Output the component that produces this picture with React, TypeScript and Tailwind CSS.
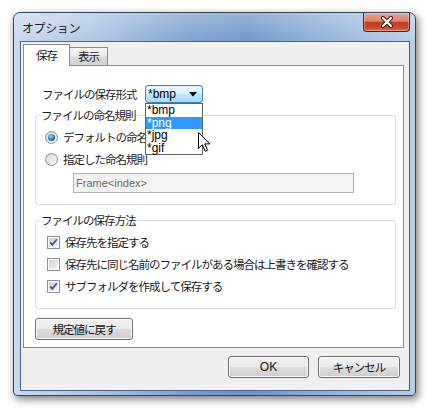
import React from "react";

function WinButton({ children, className }: { children: React.ReactNode; className?: string }) {
  return (
    <div
      className={`h-[22px] rounded-[3px] border border-[#707070] bg-[linear-gradient(180deg,#f2f2f2_0%,#ebebeb_48%,#dddddd_52%,#cfcfcf_100%)] shadow-[inset_0_0_0_1px_#fbfbfb] flex items-center justify-center text-[#111] ${className ?? ""}`}
    >
      {children}
    </div>
  );
}

function Radio({ checked }: { checked?: boolean }) {
  return (
    <span className="w-[13px] h-[13px] shrink-0 rounded-full border border-[#8e8f8f] bg-[linear-gradient(135deg,#cfd1d4,#f8f8f8)] flex items-center justify-center">
      {checked ? (
        <span className="w-[7px] h-[7px] rounded-full bg-[radial-gradient(circle_at_40%_35%,#9ad8f6_0%,#2a78b8_55%,#174f80_100%)]" />
      ) : (
        <span className="w-[9px] h-[9px] rounded-full bg-[linear-gradient(135deg,#d8d8d8,#fafafa)]" />
      )}
    </span>
  );
}

function Check({ checked }: { checked?: boolean }) {
  return (
    <span className="relative w-[13px] h-[13px] shrink-0 border border-[#8e8f8f] bg-white p-[1px]">
      <span className="block w-full h-full bg-[linear-gradient(135deg,#c9cdd3,#f7f7f7)]" />
      {checked && (
        <svg className="absolute -left-px -top-px" width="13" height="13" viewBox="0 0 13 13">
          <path d="M3.2 6.3 L5.4 8.9 L9.8 3.2" fill="none" stroke="#3a5a92" strokeWidth="1.8" />
        </svg>
      )}
    </span>
  );
}

export default function App() {
  return (
    <div className="w-[432px] h-[413px] bg-white pt-[12px] pl-[13px] font-['Noto_Sans_CJK_JP',sans-serif] text-[11.5px] leading-[13px] tracking-[-1px] text-[#1a1a1a]">
      <div className="relative w-[403px] h-[384px] flex flex-col rounded-t-[7px] rounded-b-[4px] border border-[#33475f] bg-[linear-gradient(90deg,#c9d8ea_0%,#b0c7e3_18%,#7d9fcf_42%,#6c92c7_58%,#97b5dc_82%,#b9cde6_100%)] shadow-[2px_3px_9px_rgba(0,0,0,0.55)]">
        {/* title bar */}
        <div className="h-[28px] flex items-start justify-between rounded-t-[6px] bg-[linear-gradient(180deg,rgba(255,255,255,0.3),rgba(255,255,255,0.05))]">
          <span className="pl-[8px] pt-[8px] text-[12px] tracking-[-0.4px] text-[#1e1e1e]">オプション</span>
          <div className="mr-[5px] w-[47px] h-[19px] rounded-b-[4px] border border-t-0 border-[#57201a] bg-[linear-gradient(180deg,#e8a595_0%,#d9846f_45%,#c23e22_52%,#c5462a_80%,#dd7357_100%)] shadow-[inset_0_0_0_1px_rgba(255,255,255,0.3)] flex items-center justify-center">
            <svg width="14" height="12" viewBox="0 0 14 12">
              <path d="M3 2 L11 10 M11 2 L3 10" stroke="#3b1610" strokeWidth="4" strokeLinecap="round" />
              <path d="M3 2 L11 10 M11 2 L3 10" stroke="#ffffff" strokeWidth="2.2" strokeLinecap="round" />
            </svg>
          </div>
        </div>

        {/* client area */}
        <div className="ml-[6px] w-[390px] h-[350px] border border-[#46658c] bg-[#f0f0f0] flex flex-col">
          {/* tabs */}
          <div className="mt-[2px] ml-[2px] h-[21px] flex items-end">
            <div className="relative z-10 -mb-px w-[47px] h-[22px] border border-b-0 border-[#898c95] bg-white flex items-center justify-center">
              保存
            </div>
            <div className="w-[38px] h-[18px] border border-l-0 border-b-0 border-[#898c95] bg-[linear-gradient(180deg,#f3f3f3_0%,#ebebeb_48%,#dddddd_52%,#cfcfcf_100%)] flex items-center justify-center">
              表示
            </div>
          </div>

          {/* panel */}
          <div className="ml-[2px] w-[381px] h-[283px] border border-[#898c95] bg-white flex flex-col">
            <div className="relative z-20 mt-[19px] ml-[18px] h-[18px] flex items-center">
              <span className="w-[103px]">ファイルの保存形式</span>
              <div className="relative">
                <div className="w-[58px] h-[18px] rounded-[3px] border border-[#3c7fb1] bg-[linear-gradient(180deg,#eaf6fd_0%,#d9f0fc_48%,#bee6fd_52%,#a7d9f5_100%)] flex items-center justify-between pl-[2px] pr-[5px] font-['Liberation_Sans',sans-serif] text-[12px] tracking-normal text-black">
                  <span>*bmp</span>
                  <svg width="8" height="5" viewBox="0 0 8 5">
                    <path d="M0 0 L8 0 L4 4.5 Z" fill="#000" />
                  </svg>
                </div>
                <div className="absolute left-0 top-full w-[58px] border border-[#646464] bg-white font-['Liberation_Sans',sans-serif] text-[12px] leading-[12.5px] tracking-normal text-black">
                  <div className="pl-[1px] h-[12.5px]">*bmp</div>
                  <div className="pl-[1px] h-[12.5px] bg-[#3399ff] text-white">*png</div>
                  <div className="pl-[1px] h-[12.5px]">*jpg</div>
                  <div className="pl-[1px] h-[12.5px]">*gif</div>
                </div>
                <svg className="absolute left-[53px] top-[47px]" width="13" height="21" viewBox="0 0 13 21">
                  <path
                    d="M0.5 0.5 L0.5 16.5 L4.3 12.8 L7.2 19.3 L9.6 18.3 L6.8 11.9 L12 11.9 Z"
                    fill="#fff"
                    stroke="#000"
                    strokeWidth="1"
                    strokeLinejoin="miter"
                  />
                </svg>
              </div>
            </div>

            <fieldset className="mt-[6px] ml-[11px] w-[361px] rounded-[3px] border border-[#d5dfe5]">
              <legend className="ml-[4px] px-[1px] leading-[13px]">ファイルの命名規則</legend>
              <div className="pt-[4px] pl-[9px] pb-[11px] flex flex-col">
                <div className="h-[22px] flex items-center gap-[5px]">
                  <Radio checked />
                  <span>デフォルトの命名規則</span>
                </div>
                <div className="h-[22px] flex items-center gap-[5px]">
                  <Radio />
                  <span>指定した命名規則</span>
                </div>
                <div className="mt-[3px] ml-[28px] w-[281px] h-[20px] border border-[#adb2b5] bg-[#f3f3f3] flex items-center pl-[2px] font-['Liberation_Sans',sans-serif] text-[11px] tracking-normal text-[#6d6d6d]">
                  Frame&lt;index&gt;
                </div>
              </div>
            </fieldset>

            <fieldset className="mt-[9px] ml-[11px] w-[361px] rounded-[3px] border border-[#d5dfe5]">
              <legend className="ml-[4px] px-[1px] leading-[13px]">ファイルの保存方法</legend>
              <div className="pt-[4px] pl-[11px] pb-[11px] flex flex-col">
                <div className="h-[22px] flex items-center gap-[5px]">
                  <Check checked />
                  <span>保存先を指定する</span>
                </div>
                <div className="h-[22px] flex items-center gap-[5px]">
                  <Check />
                  <span>保存先に同じ名前のファイルがある場合は上書きを確認する</span>
                </div>
                <div className="h-[22px] flex items-center gap-[5px]">
                  <Check checked />
                  <span>サブフォルダを作成して保存する</span>
                </div>
              </div>
            </fieldset>

            <WinButton className="mt-[9px] ml-[11px] w-[98px]">規定値に戻す</WinButton>
          </div>

          {/* dialog buttons */}
          <div className="mt-[8px] pr-[9px] flex justify-end gap-[9px]">
            <WinButton className="w-[81px] font-['Liberation_Sans',sans-serif] tracking-normal text-[12px]">OK</WinButton>
            <WinButton className="w-[82px]">キャンセル</WinButton>
          </div>
        </div>
      </div>
    </div>
  );
}
